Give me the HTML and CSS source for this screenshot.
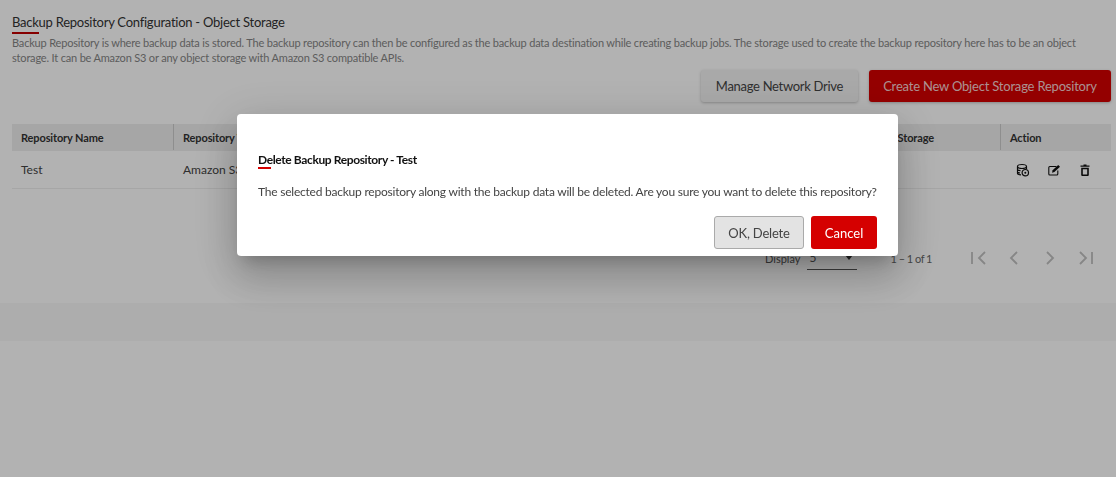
FILE: index.html
```html
<!DOCTYPE html>
<html lang="en">
<head>
<meta charset="utf-8">
<title>Backup Repository Configuration</title>
<link rel="stylesheet" href="styles.css">
</head>
<body>
<main class="page">
  <section class="content">
    <h1 class="title">Backup Repository Configuration - Object Storage</h1>
    <p class="desc">Backup Repository is where backup data is stored. The backup repository can then be configured as the backup data destination while creating backup jobs. The storage used to create the backup repository here has to be an object<br>storage. It can be Amazon S3 or any object storage with Amazon S3 compatible APIs.</p>
    <div class="toolbar">
      <button class="btn btn-light">Manage Network Drive</button>
      <button class="btn btn-red">Create New Object Storage Repository</button>
    </div>
    <div class="table">
      <div class="row head">
        <div class="cell c1">Repository Name</div>
        <div class="cell c2">Repository Type</div>
        <div class="cell c3">Used Storage</div>
        <div class="cell c4">Action</div>
      </div>
      <div class="row body">
        <div class="cell c1">Test</div>
        <div class="cell c2">Amazon S3</div>
        <div class="cell c3"></div>
        <div class="cell c4 actions">
          <svg class="ico" viewBox="0 0 14 14" width="14" height="14"><path d="M1.500 3.500V10.500c0 .8 1 1.200 3.500 1.300M1.500 3.500C1.500 2.300 3.500 1.500 6 1.500S10.500 2.300 10.500 3.500 8.500 5.500 6 5.500 1.500 4.700 1.500 3.500ZM1.500 6.300c0 .8 1.200 1.300 3 1.400M1.500 8.800c0 .6.800 1 2.500 1.200M10.500 3.500V6" fill="none" stroke="#111" stroke-width="1.200"/><circle cx="9.300" cy="9.700" r="3.200" fill="none" stroke="#111" stroke-width="1.200"/><circle cx="9.300" cy="9.700" r="1" fill="#111"/></svg>
          <svg class="ico" viewBox="0 0 14 14" width="14" height="14"><path d="M9.500 3.500H2.800a1 1 0 0 0-1 1V11a1 1 0 0 0 1 1h7a1 1 0 0 0 1-1V7.500" fill="none" stroke="#111" stroke-width="1.100"/><path d="M5 9.700l.6-2.400L11.200 2l1.800 1.700L7.400 9.100Z" fill="#111"/></svg>
          <svg class="ico" viewBox="0 0 14 14" width="14" height="14"><path d="M5.500 2.500V1.500h3v1H11.500v1.300h-9V2.500ZM3.200 4.800h7.600V12a1 1 0 0 1-1 1H4.200a1 1 0 0 1-1-1Zm1.600 1.400V11.600h4.400V6.200Z" fill="#111" fill-rule="evenodd"/></svg>
        </div>
      </div>
    </div>
    <div class="pager">
      <span class="pg-label">Display</span>
      <span class="pg-select"><span>5</span><i class="caret"></i></span>
      <span class="pg-range">1 – 1 of 1</span>
      <span class="pg-icons">
        <svg viewBox="0 0 20 20" width="20" height="20"><path d="M4 4v12M17 4l-6 6 6 6" fill="none" stroke="#c0c0c0" stroke-width="1.800"/></svg>
        <svg viewBox="0 0 20 20" width="20" height="20"><path d="M13 4l-6 6 6 6" fill="none" stroke="#c0c0c0" stroke-width="1.800"/></svg>
        <svg viewBox="0 0 20 20" width="20" height="20"><path d="M7 4l6 6-6 6" fill="none" stroke="#c0c0c0" stroke-width="1.800"/></svg>
        <svg viewBox="0 0 20 20" width="20" height="20"><path d="M16 4v12M4 4l6 6-6 6" fill="none" stroke="#c0c0c0" stroke-width="1.800"/></svg>
      </span>
    </div>
  </section>
  <div class="band"></div>
</main>
<div class="overlay"></div>
<div class="modal" role="dialog">
  <h2 class="m-title">Delete Backup Repository - Test</h2>
  <p class="m-text">The selected backup repository along with the backup data will be deleted. Are you sure you want to delete this repository?</p>
  <div class="m-actions">
    <button class="btn-m ok">OK, Delete</button>
    <button class="btn-m cancel">Cancel</button>
  </div>
</div>
</body>
</html>
```
FILE: styles.css
```css
* { box-sizing: border-box; }
html, body { height: 100%; }
body {
  margin: 0;
  background: #fff;
  font-family: Lato, "Liberation Sans", sans-serif;
  color: #333;
  overflow: hidden;
}
.content { padding: 14px 5px 0 12px; height: 303px; }
.title {
  margin: 0;
  font-size: 13px;
  letter-spacing: -.25px;
  font-weight: 400;
  line-height: 17px;
  color: #333;
  padding-bottom: 1px;
}
.title::after {
  content: "";
  display: block;
  width: 27px;
  height: 2px;
  margin-top: 1px;
  background: #c00000;
}
.desc {
  margin: 0;
  font-size: 11px;
  letter-spacing: -.18px;
  line-height: 15px;
  color: #858585;
  white-space: nowrap;
}
.toolbar {
  display: flex;
  justify-content: flex-end;
  gap: 11px;
  margin-top: 5px;
}
.btn {
  height: 32px;
  border: 0;
  border-radius: 3px;
  font-family: inherit;
  font-size: 13px;
  padding: 0;
  white-space: nowrap;
  box-shadow: 0 1px 3px rgba(0,0,0,.25);
}
.btn-light { background: #f2f2f2; color: #444; width: 157px; letter-spacing: -.3px; }
.btn-red { background: #d50000; color: #f5d0d0; width: 242px; letter-spacing: -.2px; }
.table { margin-top: 22px; }
.row { display: flex; }
.head { height: 27px; background: #eee; font-size: 11px; font-weight: 700; color: #333; letter-spacing: -.13px; padding-bottom: 1px; }
.body { height: 38px; font-size: 12px; border-bottom: 1px solid #eee; color: #444; }
.cell { display: flex; align-items: center; padding-left: 9px; }
.head .cell { border-right: 1px solid #ccc; }
.head .cell:last-child { border-right: 0; }
.c1 { width: 162px; }
.c2 { width: 400px; }
.c3 { width: 427px; justify-content: flex-end; padding-right: 66px; }
.c4 { flex: 1; }
.actions { gap: 17px; padding-left: 15px; }
.ico { display: block; }
.pager {
  display: flex;
  align-items: center;
  height: 24px;
  margin: 57px 0 0 753px;
  font-size: 11px;
  color: #555;
}
.pg-select {
  display: flex;
  justify-content: space-between;
  align-items: center;
  width: 50px;
  height: 23px;
  margin-left: 7px;
  padding: 0 2px;
  border-bottom: 1px solid #555;
  font-size: 12px;
}
.caret {
  width: 0;
  height: 0;
  border-left: 4.500px solid transparent;
  border-right: 4.500px solid transparent;
  border-top: 5px solid #333;
  margin-right: 2px;
}
.pg-range { margin-left: 33px; width: 41px; color: #666; letter-spacing: -.5px; white-space: nowrap; }
.pg-icons { display: flex; gap: 16px; margin-left: 37px; }
.band { height: 38px; background: #f8f8f8; }
.overlay {
  position: fixed;
  inset: 0;
  background: rgba(0,0,0,.3);
}
.modal {
  position: fixed;
  left: 237px;
  top: 114px;
  width: 661px;
  height: 142px;
  padding: 38px 21px 0;
  background: #fff;
  border-radius: 4px;
  box-shadow: 0 11px 15px -7px rgba(0,0,0,.2), 0 24px 38px 3px rgba(0,0,0,.14), 0 9px 46px 8px rgba(0,0,0,.12);
}
.m-title {
  margin: 0;
  font-size: 12px;
  letter-spacing: -.38px;
  font-weight: 700;
  line-height: 15px;
  color: #111;
  padding-bottom: 2px;
}
.m-title::after {
  content: "";
  display: block;
  width: 13px;
  height: 2px;
  background: #d50000;
}
.m-text {
  margin: 13px 0 0;
  font-size: 12px;
  letter-spacing: -.224px;
  line-height: 16px;
  color: #444;
  white-space: nowrap;
}
.m-actions {
  display: flex;
  justify-content: flex-end;
  gap: 7px;
  margin-top: 16px;
}
.btn-m {
  height: 33px;
  border-radius: 3px;
  font-family: inherit;
  font-size: 13px;
}
.ok { width: 90px; background: #e3e3e3; border: 1px solid #aaa; color: #444; letter-spacing: -.2px; }
.cancel { width: 66px; background: #d50000; border: 0; color: #fff; }
```
